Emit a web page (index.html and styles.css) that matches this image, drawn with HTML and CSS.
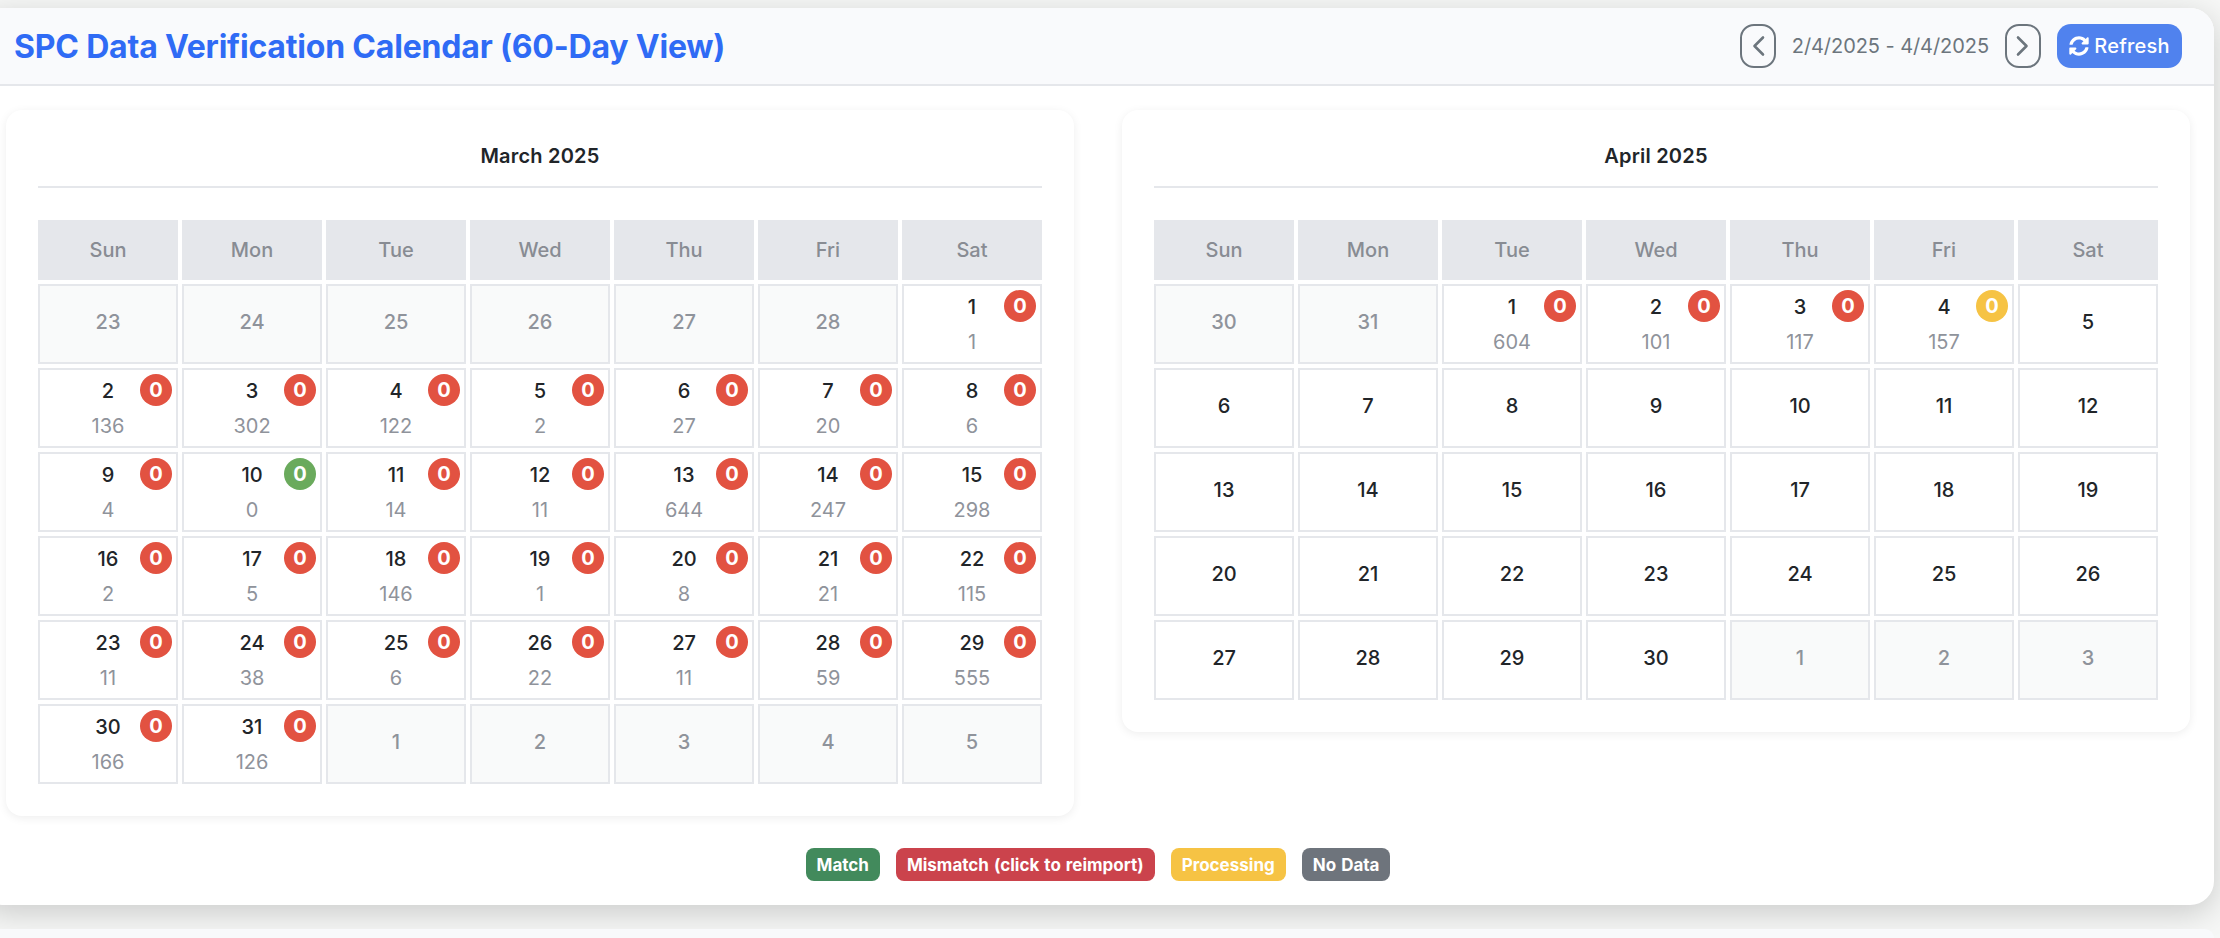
FILE: index.html
```html
<!DOCTYPE html>
<html lang="en">
<head>
<meta charset="utf-8">
<title>SPC Data Verification Calendar</title>
<link rel="stylesheet" href="styles.css">
</head>
<body>
<div class="app">
  <header class="topbar">
    <h1 class="page-title">SPC Data Verification Calendar (60-Day View)</h1>
    <div class="controls">
      <button class="nav-btn" type="button" aria-label="Previous"><svg width="16" height="22" viewBox="0 0 16 22"><path d="M13 2.5 4.5 11l8.5 8.500" /></svg></button>
      <span class="range">2/4/2025 - 4/4/2025</span>
      <button class="nav-btn" type="button" aria-label="Next"><svg width="16" height="22" viewBox="0 0 16 22"><path d="M3 2.500 11.500 11 3 19.500" /></svg></button>
      <button class="refresh" type="button"><svg width="20" height="20" viewBox="0 0 512 512"><path d="M370.72 133.28C339.458 104.008 298.888 87.962 255.848 88c-77.458.068-144.328 53.178-162.791 126.85-1.344 5.363-6.122 9.15-11.651 9.15H24.103c-7.498 0-13.194-6.807-11.807-14.176C33.933 94.924 134.813 8 256 8c66.448 0 126.791 26.136 171.315 68.685L463.03 40.97C478.149 25.851 504 36.559 504 57.941V192c0 13.255-10.745 24-24 24H345.941c-21.382 0-32.09-25.851-16.971-40.971l41.75-41.749zM32 296h134.059c21.382 0 32.09 25.851 16.971 40.971l-41.75 41.75c31.262 29.273 71.835 45.319 114.876 45.28 77.418-.07 144.315-53.144 162.787-126.849 1.344-5.363 6.122-9.15 11.651-9.15h57.304c7.498 0 13.194 6.807 11.807 14.176C478.067 417.076 377.187 504 256 504c-66.448 0-126.791-26.136-171.315-68.685L48.97 471.03C33.851 486.149 8 475.441 8 454.059V320c0-13.255 10.745-24 24-24z"/></svg>Refresh</button>
    </div>
  </header>
  <main class="calendars">
    <section class="panel">
      <h2 class="month">March 2025</h2>
      <div class="grid">
        <div class="dow">Sun</div><div class="dow">Mon</div><div class="dow">Tue</div><div class="dow">Wed</div><div class="dow">Thu</div><div class="dow">Fri</div><div class="dow">Sat</div>
        <div class="cell other"><span class="num">23</span></div>
        <div class="cell other"><span class="num">24</span></div>
        <div class="cell other"><span class="num">25</span></div>
        <div class="cell other"><span class="num">26</span></div>
        <div class="cell other"><span class="num">27</span></div>
        <div class="cell other"><span class="num">28</span></div>
        <div class="cell"><span class="num">1</span><span class="count">1</span><span class="badge red">0</span></div>
        <div class="cell"><span class="num">2</span><span class="count">136</span><span class="badge red">0</span></div>
        <div class="cell"><span class="num">3</span><span class="count">302</span><span class="badge red">0</span></div>
        <div class="cell"><span class="num">4</span><span class="count">122</span><span class="badge red">0</span></div>
        <div class="cell"><span class="num">5</span><span class="count">2</span><span class="badge red">0</span></div>
        <div class="cell"><span class="num">6</span><span class="count">27</span><span class="badge red">0</span></div>
        <div class="cell"><span class="num">7</span><span class="count">20</span><span class="badge red">0</span></div>
        <div class="cell"><span class="num">8</span><span class="count">6</span><span class="badge red">0</span></div>
        <div class="cell"><span class="num">9</span><span class="count">4</span><span class="badge red">0</span></div>
        <div class="cell"><span class="num">10</span><span class="count">0</span><span class="badge green">0</span></div>
        <div class="cell"><span class="num">11</span><span class="count">14</span><span class="badge red">0</span></div>
        <div class="cell"><span class="num">12</span><span class="count">11</span><span class="badge red">0</span></div>
        <div class="cell"><span class="num">13</span><span class="count">644</span><span class="badge red">0</span></div>
        <div class="cell"><span class="num">14</span><span class="count">247</span><span class="badge red">0</span></div>
        <div class="cell"><span class="num">15</span><span class="count">298</span><span class="badge red">0</span></div>
        <div class="cell"><span class="num">16</span><span class="count">2</span><span class="badge red">0</span></div>
        <div class="cell"><span class="num">17</span><span class="count">5</span><span class="badge red">0</span></div>
        <div class="cell"><span class="num">18</span><span class="count">146</span><span class="badge red">0</span></div>
        <div class="cell"><span class="num">19</span><span class="count">1</span><span class="badge red">0</span></div>
        <div class="cell"><span class="num">20</span><span class="count">8</span><span class="badge red">0</span></div>
        <div class="cell"><span class="num">21</span><span class="count">21</span><span class="badge red">0</span></div>
        <div class="cell"><span class="num">22</span><span class="count">115</span><span class="badge red">0</span></div>
        <div class="cell"><span class="num">23</span><span class="count">11</span><span class="badge red">0</span></div>
        <div class="cell"><span class="num">24</span><span class="count">38</span><span class="badge red">0</span></div>
        <div class="cell"><span class="num">25</span><span class="count">6</span><span class="badge red">0</span></div>
        <div class="cell"><span class="num">26</span><span class="count">22</span><span class="badge red">0</span></div>
        <div class="cell"><span class="num">27</span><span class="count">11</span><span class="badge red">0</span></div>
        <div class="cell"><span class="num">28</span><span class="count">59</span><span class="badge red">0</span></div>
        <div class="cell"><span class="num">29</span><span class="count">555</span><span class="badge red">0</span></div>
        <div class="cell"><span class="num">30</span><span class="count">166</span><span class="badge red">0</span></div>
        <div class="cell"><span class="num">31</span><span class="count">126</span><span class="badge red">0</span></div>
        <div class="cell other"><span class="num">1</span></div>
        <div class="cell other"><span class="num">2</span></div>
        <div class="cell other"><span class="num">3</span></div>
        <div class="cell other"><span class="num">4</span></div>
        <div class="cell other"><span class="num">5</span></div>
      </div>
    </section>
    <section class="panel">
      <h2 class="month">April 2025</h2>
      <div class="grid">
        <div class="dow">Sun</div><div class="dow">Mon</div><div class="dow">Tue</div><div class="dow">Wed</div><div class="dow">Thu</div><div class="dow">Fri</div><div class="dow">Sat</div>
        <div class="cell other"><span class="num">30</span></div>
        <div class="cell other"><span class="num">31</span></div>
        <div class="cell"><span class="num">1</span><span class="count">604</span><span class="badge red">0</span></div>
        <div class="cell"><span class="num">2</span><span class="count">101</span><span class="badge red">0</span></div>
        <div class="cell"><span class="num">3</span><span class="count">117</span><span class="badge red">0</span></div>
        <div class="cell"><span class="num">4</span><span class="count">157</span><span class="badge yellow">0</span></div>
        <div class="cell plain"><span class="num">5</span></div>
        <div class="cell plain"><span class="num">6</span></div>
        <div class="cell plain"><span class="num">7</span></div>
        <div class="cell plain"><span class="num">8</span></div>
        <div class="cell plain"><span class="num">9</span></div>
        <div class="cell plain"><span class="num">10</span></div>
        <div class="cell plain"><span class="num">11</span></div>
        <div class="cell plain"><span class="num">12</span></div>
        <div class="cell plain"><span class="num">13</span></div>
        <div class="cell plain"><span class="num">14</span></div>
        <div class="cell plain"><span class="num">15</span></div>
        <div class="cell plain"><span class="num">16</span></div>
        <div class="cell plain"><span class="num">17</span></div>
        <div class="cell plain"><span class="num">18</span></div>
        <div class="cell plain"><span class="num">19</span></div>
        <div class="cell plain"><span class="num">20</span></div>
        <div class="cell plain"><span class="num">21</span></div>
        <div class="cell plain"><span class="num">22</span></div>
        <div class="cell plain"><span class="num">23</span></div>
        <div class="cell plain"><span class="num">24</span></div>
        <div class="cell plain"><span class="num">25</span></div>
        <div class="cell plain"><span class="num">26</span></div>
        <div class="cell plain"><span class="num">27</span></div>
        <div class="cell plain"><span class="num">28</span></div>
        <div class="cell plain"><span class="num">29</span></div>
        <div class="cell plain"><span class="num">30</span></div>
        <div class="cell other"><span class="num">1</span></div>
        <div class="cell other"><span class="num">2</span></div>
        <div class="cell other"><span class="num">3</span></div>
      </div>
    </section>
  </main>
  <footer class="legend">
    <span class="tag tag-green">Match</span>
    <span class="tag tag-red">Mismatch (click to reimport)</span>
    <span class="tag tag-yellow">Processing</span>
    <span class="tag tag-gray">No Data</span>
  </footer>
</div>
<div class="next-card"></div>
</body>
</html>
```
FILE: styles.css
```css
* { box-sizing: border-box; }
html, body { margin: 0; height: 938px; overflow: hidden; }
body {
  background: #f6f7f6;
  font-family: Inter, "Liberation Sans", sans-serif;
  color: #212529;
  padding-top: 8px;
}
.app {
  width: 2234px;
  height: 897px;
  margin-left: -20px;
  background: #fff;
  border-radius: 24px;
  box-shadow: 0 8px 32px rgba(0, 0, 0, 0.18);
  overflow: hidden;
}
.topbar {
  height: 78px;
  padding: 16px 32px 0 34px;
  display: flex;
  justify-content: space-between;
  align-items: flex-start;
  background: #f9fafc;
  border-bottom: 2px solid #e5e7eb;
}
.page-title {
  margin: 1px 0 0;
  font-size: 32px;
  line-height: 44px;
  font-weight: 700;
  letter-spacing: -0.19px;
  color: #2f6bf5;
}
.controls { display: flex; align-items: center; gap: 16px; }
.nav-btn {
  width: 36px;
  height: 44px;
  padding: 0;
  display: flex;
  align-items: center;
  justify-content: center;
  background: transparent;
  border: 2px solid #6c757d;
  border-radius: 14px;
}
.nav-btn path {
  fill: none;
  stroke: #6c757d;
  stroke-width: 2.6;
  stroke-linecap: round;
  stroke-linejoin: round;
}
.range { font-size: 20px; color: #6c757d; letter-spacing: -0.07px; }
.refresh {
  width: 125px;
  height: 44px;
  padding: 0;
  display: flex;
  align-items: center;
  justify-content: center;
  gap: 5px;
  border: 0;
  border-radius: 14px;
  background: #5082ee;
  color: #fff;
  font-family: inherit;
  font-size: 20px;
  font-weight: 500;
  letter-spacing: 0.2px;
}
.refresh svg { fill: #fff; }
.calendars {
  display: grid;
  grid-template-columns: 1068px 1068px;
  gap: 48px;
  align-items: start;
  padding: 24px 0 0 26px;
}
.panel {
  background: #fff;
  border-radius: 16px;
  padding: 0 32px 32px;
  box-shadow: 0 2px 10px rgba(0, 0, 0, 0.07);
}
.month {
  margin: 0 0 32px;
  padding: 32px 0 16px;
  font-size: 20px;
  line-height: 28px;
  font-weight: 600;
  letter-spacing: 0.2px;
  text-align: center;
  color: #212529;
  border-bottom: 2px solid #e5e7eb;
}
.grid {
  display: grid;
  grid-template-columns: repeat(7, 140px);
  grid-template-rows: 60px;
  grid-auto-rows: 80px;
  gap: 4px;
}
.dow {
  display: flex;
  align-items: center;
  justify-content: center;
  background: #e5e7eb;
  color: #888c93;
  font-size: 20px;
  font-weight: 500;
}
.cell {
  position: relative;
  display: flex;
  flex-direction: column;
  align-items: center;
  justify-content: center;
  background: #fff;
  border: 2px solid #e5e7eb;
}
.cell.other { background: #f9fafa; color: #8f939b; padding-bottom: 4px; }
.cell.plain { padding-bottom: 4px; }
.num { font-size: 20px; line-height: 30px; font-weight: 500; }
.count { margin-top: 5px; font-size: 20px; line-height: 30px; color: #8f939b; }
.badge {
  position: absolute;
  top: 4px;
  right: 4px;
  width: 32px;
  height: 32px;
  display: flex;
  align-items: center;
  justify-content: center;
  border-radius: 50%;
  color: #fff;
  font-size: 20px;
  font-weight: 700;
}
.red { background: #e25241; }
.green { background: #6aaa5c; }
.yellow { background: #f6c344; }
.legend {
  margin-top: 32px;
  padding: 0 24px 0 26px;
  display: flex;
  justify-content: center;
  gap: 16px;
}
.tag {
  height: 33px;
  padding: 0 11px;
  display: flex;
  align-items: center;
  border-radius: 8px;
  color: #fff;
  font-size: 17px;
  font-weight: 700;
  word-spacing: 1px;
}
.tag-green { background: #428a5c; }
.tag-red { background: #cb434c; }
.tag-yellow { background: #f6c344; }
.tag-gray { background: #6e747c; }
.next-card {
  width: 2234px;
  height: 9px;
  margin: 24px 0 0 -20px;
  background: #f8f9fb;
  border-radius: 24px 24px 0 0;
}
```
